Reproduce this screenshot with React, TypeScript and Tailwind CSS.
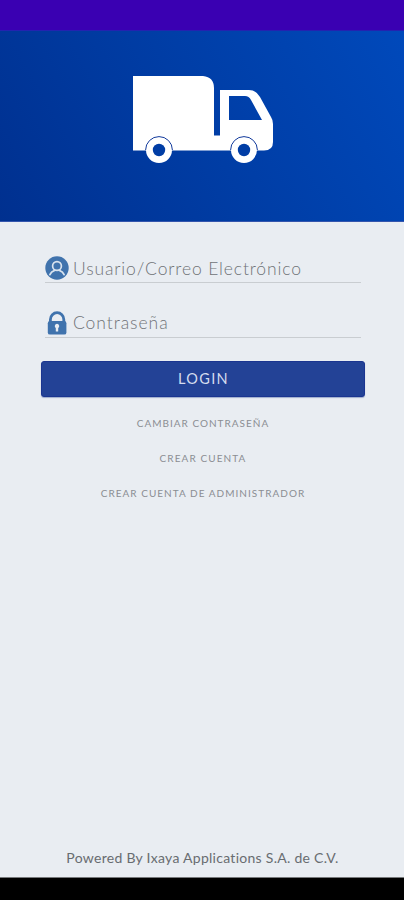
import type { ReactNode } from "react";

function Truck() {
  return (
    <svg width="142" height="90" viewBox="0 0 142 90" className="ml-[2px] block">
      <path
        fill="#fff"
        fillRule="evenodd"
        d="M1 1H71Q82 2 82 13V60.5H88V15H117Q124 15 128 22L139 42Q141 45 141 49V67Q141 75.5 132 75.5H1ZM97 21V45H130L119 25Q117 21 113 21Z"
      />
      <path fill="#fff" d="M14 75a13 13 0 0 0 26 0ZM99 75a13 13 0 0 0 26 0Z" />
      <path
        fill="none"
        stroke="#123a9c"
        strokeWidth="1"
        d="M13.6 75a13.4 13.4 0 0 1 26.8 0M98.6 75a13.4 13.4 0 0 1 26.8 0"
      />
      <circle cx="27" cy="75" r="6.2" fill="#003da5" />
      <circle cx="112" cy="75" r="6.2" fill="#003da5" />
    </svg>
  );
}

function UserIcon() {
  return (
    <svg width="24" height="24" viewBox="0 0 24 24" className="mt-[2px] block">
      <circle cx="12" cy="12" r="11.7" fill="#4073ad" />
      <g fill="none" stroke="#d9e3ee" strokeWidth="1.7" strokeLinecap="round">
        <circle cx="12" cy="10" r="4.4" />
        <path d="M4.9 18.6Q6 15.8 9.6 14.4M19.1 18.6Q18 15.8 14.4 14.4" />
      </g>
    </svg>
  );
}

function LockIcon() {
  return (
    <svg width="24" height="24" viewBox="0 0 24 24" className="mt-[2px] block">
      <path d="M5.4 12V8.4a6.7 6.7 0 0 1 13.4 0V12" fill="none" stroke="#4073ad" strokeWidth="2.8" />
      <rect x="2.8" y="10" width="18.6" height="13.6" rx="2.2" fill="#4073ad" />
      <path d="M12 12.8a2.3 2.3 0 0 1 1.2 4.2V20.6H10.8V17A2.3 2.3 0 0 1 12 12.8Z" fill="#e9edf2" />
    </svg>
  );
}

function Field({ icon, children }: { icon: ReactNode; children: ReactNode }) {
  return (
    <div className="flex h-[29px] items-start gap-1 border-b border-[#c9cdd1] text-[#707377]">
      {icon}
      {children}
    </div>
  );
}

export default function App() {
  return (
    <div className="flex h-[900px] w-[404px] flex-col overflow-hidden bg-[#e9edf2] font-['Lato','Open_Sans',sans-serif]">
      <div className="h-[30px] shrink-0 bg-[#3a00b2]" />
      <header className="flex h-[191.5px] shrink-0 justify-center border-y border-t-[#2323b0] border-b-[#3455ad] bg-linear-[60deg,#00308f,#003da5_50%,#0049bb] pt-[44px]">
        <Truck />
      </header>
      <main className="flex grow flex-col pt-[32.5px] pr-[39.5px] pl-[40.5px]">
        <div className="flex flex-col gap-[26px] pr-[3.5px] pl-[4.5px]">
          <Field icon={<UserIcon />}>
            <span className="text-[17.5px] leading-[29px] font-light tracking-[0.87px] whitespace-nowrap">Usuario/Correo Electrónico</span>
          </Field>
          <Field icon={<LockIcon />}>
            <span className="text-[17.5px] leading-[28px] font-light tracking-[0.95px] whitespace-nowrap">Contraseña</span>
          </Field>
        </div>
        <button className="mt-[23px] h-[36px] shrink-0 rounded-[3px] border border-[#1b3590] bg-[#234296] pl-[2px] text-[14.5px] tracking-[1.35px] text-[#d5dcee] shadow-[0_1px_1px_#9eaccd]">
          LOGIN
        </button>
        <nav className="mt-[16px] flex flex-col items-center gap-[15px] pl-[1px] text-[10px] leading-[20px] text-[#8b8e92]">
          <a className="tracking-[1px]">CAMBIAR CONTRASEÑA</a>
          <a className="tracking-[1.1px]">CREAR CUENTA</a>
          <a className="tracking-[1.03px]">CREAR CUENTA DE ADMINISTRADOR</a>
        </nav>
        <footer className="mt-auto pb-[9px] text-center text-[14px] leading-[20px] tracking-[0.28px] whitespace-nowrap text-[#686c70]">
          Powered By Ixaya Applications S.A. de C.V.
        </footer>
      </main>
      <div className="h-[23px] shrink-0 border-t border-[#77797b] bg-black" />
    </div>
  );
}
